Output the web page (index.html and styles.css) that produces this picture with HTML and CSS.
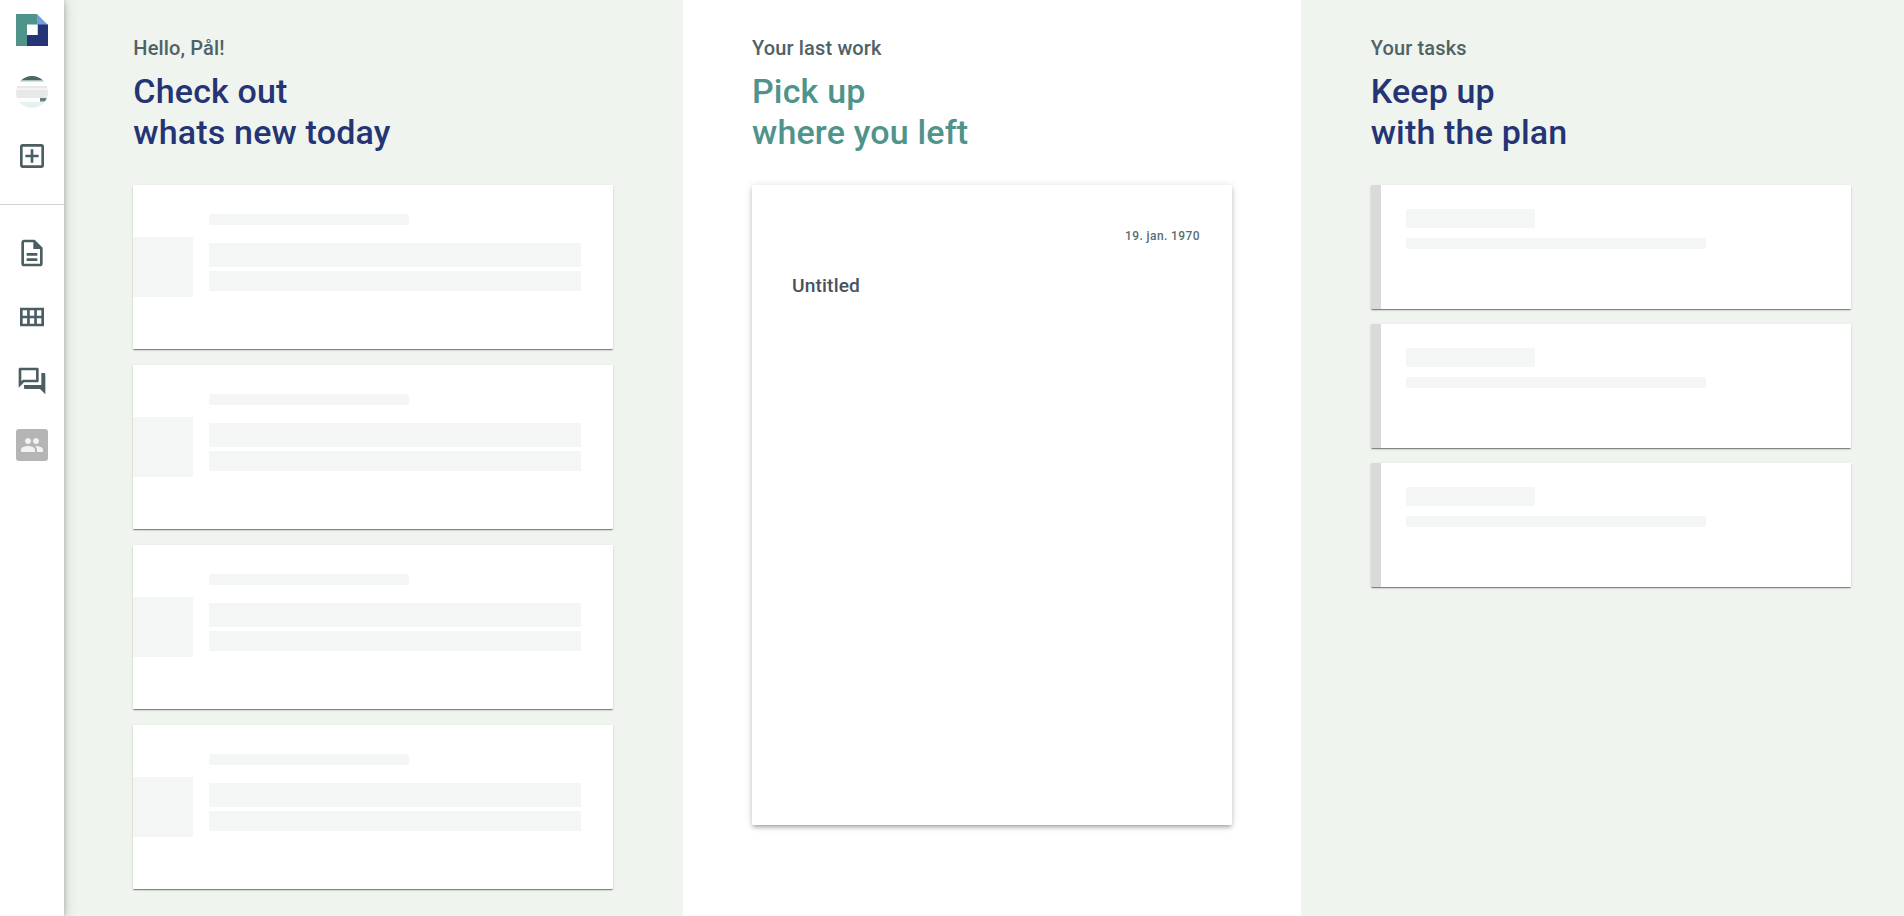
FILE: index.html
```html
<!DOCTYPE html>
<html lang="en">
<head>
<meta charset="utf-8">
<title>Dashboard</title>
<link rel="stylesheet" href="styles.css">
</head>
<body>
<div class="app">
  <nav class="sidebar">
    <div class="side-group side-top">
      <svg class="logo" viewBox="0 0 32 32"><path fill="#50938b" d="M0 0h21v11H11v21H0z"/><path fill="#72a0dc" d="M21 0l11 11H21z"/><path fill="#243475" d="M21.500 10.500H32V32H11V21h10.500z"/><path fill="#fff" d="M11 10.500h10.500V21H11z"/></svg>
      <svg class="avatar" viewBox="0 0 32 32"><defs><clipPath id="disc"><circle cx="16" cy="16" r="16"/></clipPath></defs><g clip-path="url(#disc)"><path fill="#fcfdfd" d="M0 0h32v32H0z"/><path fill="#4a6668" d="M0 0h32v4.500H0z"/><path fill="#a9cdce" d="M0 4.500h32v1H0z"/><path fill="#e8e8e8" d="M0 10h32v2H0zM0 14h32v8H0z"/><path fill="#f4f4f4" d="M0 12h32v2H0z"/><path fill="#67817f" d="M24 22h7v3.500h-7z"/><path fill="#e6f1f2" d="M0 26h32v6H0z"/></g></svg>
      <svg class="icon" viewBox="0 0 24 24"><path d="M19 3H5a2 2 0 0 0-2 2v14c0 1.100.9 2 2 2h14a2 2 0 0 0 2-2V5a2 2 0 0 0-2-2zm0 16H5V5h14v14zm-8-2h2v-4h4v-2h-4V7h-2v4H7v2h4z"/></svg>
    </div>
    <div class="side-group side-links">
      <svg class="icon" viewBox="0 0 24 24"><path d="M8 16h8v2H8zm0-4h8v2H8zm6-10H6c-1.100 0-2 .9-2 2v16c0 1.100.89 2 1.990 2H18c1.100 0 2-.9 2-2V8l-6-6zm4 18H6V4h7v5h5v11z"/></svg>
      <svg class="icon" viewBox="0 0 24 24"><path d="M3 5v14h18V5H3zm16 6h-3.330V7H19v4zm-5.330 0h-3.340V7h3.340v4zM8.330 7v4H5V7h3.330zM5 17v-4h3.330v4H5zm5.330 0v-4h3.340v4h-3.340zm5.340 0v-4H19v4h-3.330z"/></svg>
      <svg class="icon" viewBox="0 0 24 24"><path d="M15 4v7H5.170L4 12.170V4h11m1-2H3c-.55 0-1 .45-1 1v14l4-4h10c.55 0 1-.45 1-1V3c0-.55-.45-1-1-1zm5 4h-2v9H6v2c0 .55.45 1 1 1h11l4 4V7c0-.55-.45-1-1-1z"/></svg>
      <div class="team"><svg viewBox="0 0 24 24"><path d="M16 11c1.660 0 2.990-1.340 2.990-3S17.660 5 16 5s-3 1.340-3 3 1.340 3 3 3zm-8 0c1.660 0 2.990-1.340 2.990-3S9.660 5 8 5 5 6.340 5 8s1.340 3 3 3zm0 2c-2.330 0-7 1.170-7 3.500V19h14v-2.500C15 14.170 10.330 13 8 13zm8 0c-.29 0-.62.02-.97.05 1.160.84 1.970 1.970 1.970 3.450V19h6v-2.500c0-2.330-4.670-3.500-7-3.500z"/></svg></div>
    </div>
  </nav>
  <main class="columns">
    <section class="column tinted">
      <p class="label">Hello, Pål!</p>
      <h2 class="title">Check out<br>whats new today</h2>
      <div class="news-list">
        <div class="news card"><div class="thumb"></div><div class="news-body"><div class="bar"></div><div class="line tall"></div><div class="line"></div></div></div>
        <div class="news card"><div class="thumb"></div><div class="news-body"><div class="bar"></div><div class="line tall"></div><div class="line"></div></div></div>
        <div class="news card"><div class="thumb"></div><div class="news-body"><div class="bar"></div><div class="line tall"></div><div class="line"></div></div></div>
        <div class="news card"><div class="thumb"></div><div class="news-body"><div class="bar"></div><div class="line tall"></div><div class="line"></div></div></div>
      </div>
    </section>
    <section class="column">
      <p class="label">Your last work</p>
      <h2 class="title green">Pick up<br>where you left</h2>
      <article class="document">
        <time class="date">19. jan. 1970</time>
        <h3 class="doc-title">Untitled</h3>
      </article>
    </section>
    <section class="column tinted">
      <p class="label">Your tasks</p>
      <h2 class="title">Keep up<br>with the plan</h2>
      <div class="task-list">
        <div class="task card"><div class="task-name"></div><div class="task-text"></div></div>
        <div class="task card"><div class="task-name"></div><div class="task-text"></div></div>
        <div class="task card"><div class="task-name"></div><div class="task-text"></div></div>
      </div>
    </section>
  </main>
</div>
</body>
</html>
```
FILE: styles.css
```css
* { box-sizing: border-box; }
body { margin: 0; font-family: Roboto, sans-serif; font-weight: 500; background: #fff; overflow: hidden; }
.app { display: flex; height: 916px; overflow: hidden; }
.sidebar { position: relative; z-index: 1; flex: 0 0 64px; background: #fff; box-shadow: 0 5px 5px -3px rgba(0,0,0,.2), 0 0 6px rgba(0,0,0,.24), 0 3px 14px 2px rgba(0,0,0,.1); }
.side-group { display: flex; flex-direction: column; align-items: center; }
.side-top { height: 205px; padding-top: 14px; border-bottom: 1px solid #d2d2d2; }
.side-links { padding-top: 32px; gap: 32px; }
.logo, .avatar, .icon { display: block; width: 32px; height: 32px; }
.avatar { margin: 30px 0 32px; }
.icon { fill: #4b5e62; }
.team { width: 32px; height: 32px; padding: 4px; border-radius: 3px; background: #b5b5b5; }
.team svg { display: block; width: 24px; height: 24px; fill: #eff4ee; }
.columns { flex: 0 0 1856px; display: grid; grid-template-columns: repeat(3, 1fr); }
.column { padding: 36px 69px 0 69.330px; background: #fff; }
.tinted { background: #eff4ee; }
.label { margin: 0; font-size: 20px; line-height: 24px; letter-spacing: .15px; color: #4f6266; }
.title { margin: 11px 0 32px; font-size: 34px; font-weight: 500; line-height: 41px; letter-spacing: .17px; color: #243475; }
.green { color: #50938b; }
.card { background: #fff; border-radius: 1px; box-shadow: 0 2px 1px -1px rgba(0,0,0,.26), 0 1px 1px rgba(0,0,0,.22), 0 1px 3px rgba(0,0,0,.12); }
.news-list { display: grid; gap: 16px; }
.news { display: flex; gap: 16px; width: 480px; height: 164px; }
.thumb { width: 60px; height: 60px; margin-top: 52px; background: #f4f6f5; }
.news-body { width: 372px; padding-top: 29px; }
.bar { width: 200px; height: 11px; margin-bottom: 18px; border-radius: 2px; background: #f4f6f5; }
.line { height: 20px; background: #f4f6f5; }
.tall { height: 24px; margin-bottom: 4px; }
.document { display: flex; flex-direction: column; width: 480px; height: 640px; padding: 43px 32px 0 40px; background: #fff; border-radius: 1px; box-shadow: 0 3px 3px -2px rgba(0,0,0,.2), 0 3px 4px rgba(0,0,0,.14), 0 1px 8px rgba(0,0,0,.14); }
.date { align-self: flex-end; font-size: 12px; line-height: 16px; letter-spacing: .4px; color: #5a6d70; }
.doc-title { margin: 30px 0 0; font-size: 19.2px; font-weight: 500; line-height: 24px; letter-spacing: .15px; color: #48535c; }
.task-list { display: grid; gap: 15px; }
.task { width: 480px; height: 124px; padding: 24px 0 0 25px; border-left: 10px solid #dadada; }
.task-name { width: 129px; height: 19px; margin-bottom: 10px; border-radius: 2px; background: #f4f6f5; }
.task-text { width: 300px; height: 11px; border-radius: 2px; background: #f4f6f5; }
```
